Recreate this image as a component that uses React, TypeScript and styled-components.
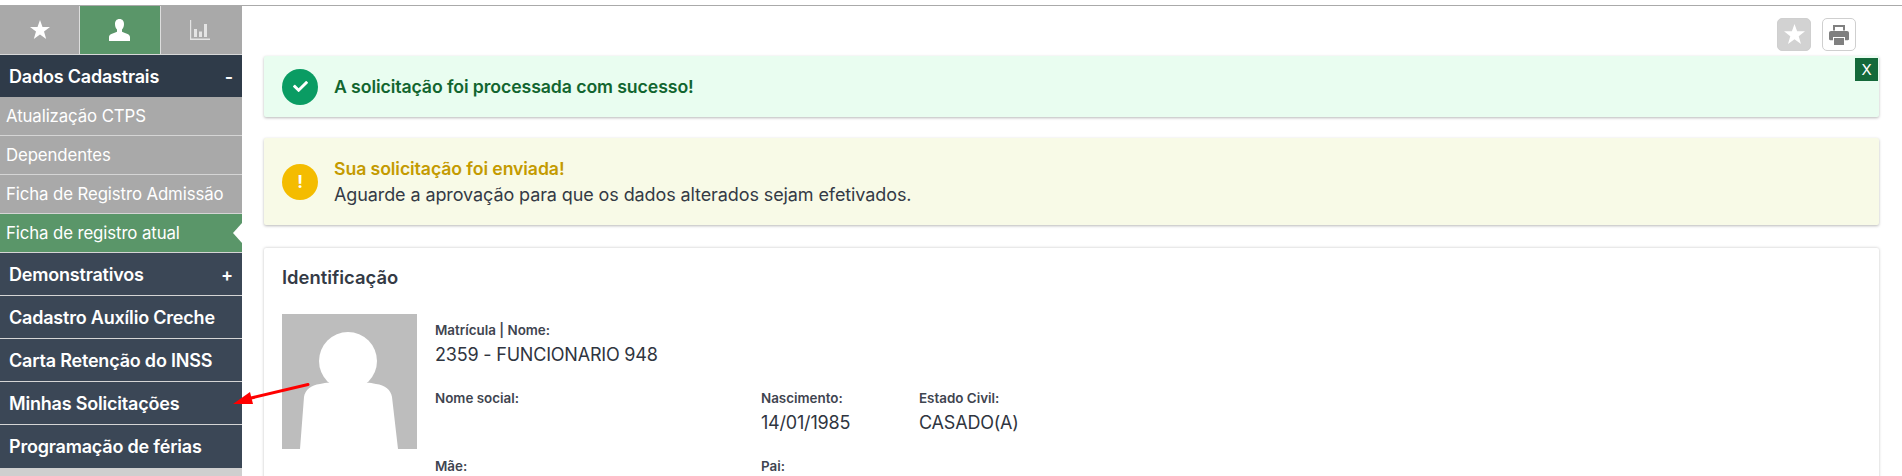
import React from 'react';
import styled, { createGlobalStyle } from 'styled-components';
import { FaCheck } from 'react-icons/fa';

const GlobalStyle = createGlobalStyle`
  html, body {
    margin: 0;
    padding: 0;
    height: 476px;
    overflow: hidden;
    background: #fff;
    font-family: Inter, Lato, sans-serif;
    color: #343a45;
  }
`;

const Page = styled.div`
  position: relative;
  height: 476px;
  padding-top: 5px;
  box-sizing: border-box;
  overflow: hidden;
`;

const Frame = styled.div`
  display: flex;
  height: 470px;
  border-top: 1px solid #aaa;
`;

const Sidebar = styled.nav`
  width: 242px;
  flex: none;
  background: #cfcfcf;
`;

const Tabs = styled.div`
  display: flex;
  height: 49px;
  box-sizing: border-box;
  background: #a9a9a9;
  border-bottom: 1px solid #d8d8d8;
  padding-right: 2px;
`;

const Tab = styled.div<{ $active?: boolean }>`
  flex: 1;
  display: flex;
  align-items: center;
  justify-content: center;
  color: #fff;
  background: ${(p) => (p.$active ? '#5a9669' : '#a9a9a9')};
  border-left: ${(p) => (p.$active ? '1px solid #ddd' : 'none')};
  border-right: ${(p) => (p.$active ? '1px solid #ddd' : 'none')};
`;

const MenuHeader = styled.div<{ $open?: boolean }>`
  display: flex;
  align-items: center;
  justify-content: space-between;
  height: ${(p) => (p.$open ? '42px' : '43px')};
  box-sizing: border-box;
  padding: 0 9px;
  background: ${(p) => (p.$open ? '#2f3b49' : '#3b4756')};
  border-bottom: ${(p) => (p.$open ? 'none' : '1px solid #d5d5d5')};
  color: #fff;
  font-size: 18px;
  font-weight: 600;
  letter-spacing: -0.2px;
  &:last-child {
    border-bottom: none;
  }
`;

const SubItem = styled.div<{ $active?: boolean }>`
  position: relative;
  display: flex;
  align-items: center;
  height: 39px;
  box-sizing: border-box;
  padding-left: 6px;
  background: ${(p) => (p.$active ? '#5a9669' : '#a9a9a9')};
  border-bottom: 1px solid #d5d5d5;
  color: #fff;
  font-size: 16.8px;
  letter-spacing: -0.1px;
`;

const Notch = styled.span`
  position: absolute;
  right: 0;
  top: 50%;
  margin-top: -10px;
  border-style: solid;
  border-width: 10px 9px 10px 0;
  border-color: transparent #fff transparent transparent;
`;

const Main = styled.main`
  flex: 1;
  padding: 12px 23px 0 22px;
  min-width: 0;
`;

const Toolbar = styled.div`
  display: flex;
  justify-content: flex-end;
  gap: 11px;
  height: 34px;
  padding-right: 23px;
`;

const ToolButton = styled.div<{ $filled?: boolean }>`
  width: 34px;
  height: 33px;
  box-sizing: border-box;
  border-radius: 5px;
  display: flex;
  align-items: center;
  justify-content: center;
  background: ${(p) => (p.$filled ? '#d2d2d2' : '#fff')};
  border: 1px solid #cfcfcf;
  color: ${(p) => (p.$filled ? '#fff' : '#808080')};
`;

const Alert = styled.div<{ $tone: 'success' | 'warning' }>`
  position: relative;
  display: flex;
  align-items: center;
  gap: 16px;
  box-sizing: border-box;
  height: ${(p) => (p.$tone === 'success' ? '61px' : '87px')};
  margin-top: ${(p) => (p.$tone === 'success' ? '4px' : '21px')};
  padding-left: 18px;
  border-radius: 2px;
  background: ${(p) => (p.$tone === 'success' ? '#e9fdf0' : '#f8fae7')};
  box-shadow: 0 1px 3px rgba(0, 0, 0, 0.28);
`;

const AlertIcon = styled.div<{ $tone: 'success' | 'warning' }>`
  width: 36px;
  height: 36px;
  flex: none;
  border-radius: 50%;
  display: flex;
  align-items: center;
  justify-content: center;
  background: ${(p) => (p.$tone === 'success' ? '#0a9c63' : '#f4bc00')};
  color: #fff;
  font-size: 17px;
  font-weight: 700;
`;

const AlertTitle = styled.div<{ $tone: 'success' | 'warning' }>`
  font-size: 17.7px;
  font-weight: 600;
  line-height: 26px;
  letter-spacing: -0.1px;
  color: ${(p) => (p.$tone === 'success' ? '#11652f' : '#c49a00')};
`;

const AlertText = styled.div`
  font-size: 18px;
  line-height: 26px;
  letter-spacing: -0.1px;
  color: #343a45;
`;

const CloseButton = styled.div`
  position: absolute;
  top: 2px;
  right: 1px;
  width: 23px;
  height: 23px;
  display: flex;
  align-items: center;
  justify-content: center;
  background: #14693a;
  color: #fff;
  font-size: 15px;
`;

const Card = styled.section`
  margin-top: 23px;
  height: 260px;
  padding: 18px 18px;
  box-sizing: border-box;
  border-radius: 2px;
  box-shadow: 0 0 3px rgba(0, 0, 0, 0.25);
`;

const CardTitle = styled.h2`
  margin: 0 0 26px;
  font-size: 18.4px;
  line-height: 22px;
  font-weight: 600;
  color: #343a45;
`;

const CardBody = styled.div`
  display: flex;
  gap: 18px;
`;

const Avatar = styled.svg`
  width: 135px;
  height: 135px;
  flex: none;
  display: block;
`;

const InfoGrid = styled.div`
  display: grid;
  grid-template-columns: 326px 158px 1fr;
  grid-auto-rows: 68px;
  padding-top: 8px;
`;

const Wide = styled.div`
  grid-column: 1 / -1;
`;

const Label = styled.div`
  font-size: 13.4px;
  line-height: 17px;
  font-weight: 600;
  color: #3f4550;
`;

const Value = styled.div`
  font-size: 18px;
  line-height: 28px;
  margin-top: 2px;
  letter-spacing: -0.2px;
  color: #2f3540;
`;

const Arrow = styled.svg`
  position: absolute;
  left: 230px;
  top: 378px;
  width: 84px;
  height: 32px;
`;

const StarIcon = ({ size }: { size: number }) => (
  <svg width={size} height={size} viewBox="0 0 20 20" fill="currentColor">
    <path d="M10 0l2.500 7H20l-6 4.600L16.200 19 10 14.600 3.800 19 6 11.600 0 7h7.500z" />
  </svg>
);

const UserIcon = () => (
  <svg width="21" height="23" viewBox="0 0 21 23" fill="currentColor">
    <path d="M10.500 0C7.400 0 6 2.200 6 5c0 2.200.8 4.400 2 5.600v2.200c-2.600 1.200-8 2.200-8 5.200v4h21v-4c0-3-5.400-4-8-5.200v-2.200c1.200-1.200 2-3.400 2-5.600 0-2.800-1.400-5-4.500-5z" />
  </svg>
);

const StatsIcon = () => (
  <svg width="20" height="20" viewBox="0 0 20 20" fill="#e4e4e4">
    <path d="M0 0h1.200v18.600H20V20H0z" />
    <rect x="4" y="9" width="3" height="8" />
    <rect x="9" y="11.500" width="3" height="5.500" />
    <rect x="14" y="4" width="3" height="13" />
  </svg>
);

const PrintIcon = () => (
  <svg width="20" height="20" viewBox="0 0 20 20" fill="currentColor">
    <path d="M4 0h12v5.500h-2V2H6v3.500H4z" />
    <path d="M2 6h16c1.200 0 2 .8 2 2v6c0 .8-.5 1.200-1.200 1.200H16v-3.200H4v3.200H1.200C.5 15.200 0 14.800 0 14V8c0-1.200.8-2 2-2z" />
    <path d="M5 13h10v7H5z" />
  </svg>
);

const subItems = ['Atualização CTPS', 'Dependentes', 'Ficha de Registro Admissão'];
const menuItems = ['Cadastro Auxílio Creche', 'Carta Retenção do INSS', 'Minhas Solicitações', 'Programação de férias'];

const App = () => {
  return (
    <Page>
      <GlobalStyle />
      <Frame>
        <Sidebar>
          <Tabs>
            <Tab>
              <StarIcon size={20} />
            </Tab>
            <Tab $active>
              <UserIcon />
            </Tab>
            <Tab>
              <StatsIcon />
            </Tab>
          </Tabs>
          <MenuHeader $open>
            Dados Cadastrais <span>-</span>
          </MenuHeader>
          {subItems.map((item) => (
            <SubItem key={item}>{item}</SubItem>
          ))}
          <SubItem $active>
            Ficha de registro atual
            <Notch />
          </SubItem>
          <MenuHeader>
            Demonstrativos <span>+</span>
          </MenuHeader>
          {menuItems.map((item) => (
            <MenuHeader key={item}>{item}</MenuHeader>
          ))}
        </Sidebar>
        <Main>
          <Toolbar>
            <ToolButton $filled>
              <StarIcon size={21} />
            </ToolButton>
            <ToolButton>
              <PrintIcon />
            </ToolButton>
          </Toolbar>
          <Alert $tone="success">
            <AlertIcon $tone="success">
              <FaCheck size={15} />
            </AlertIcon>
            <AlertTitle $tone="success">A solicitação foi processada com sucesso!</AlertTitle>
            <CloseButton>X</CloseButton>
          </Alert>
          <Alert $tone="warning">
            <AlertIcon $tone="warning">!</AlertIcon>
            <div>
              <AlertTitle $tone="warning">Sua solicitação foi enviada!</AlertTitle>
              <AlertText>Aguarde a aprovação para que os dados alterados sejam efetivados.</AlertText>
            </div>
          </Alert>
          <Card>
            <CardTitle>Identificação</CardTitle>
            <CardBody>
              <Avatar viewBox="0 0 135 135">
                <rect width="135" height="135" fill="#bdbdbd" />
                <circle cx="66" cy="47" r="29" fill="#fff" />
                <path
                  d="M18 135l4-52c1-7 7-12 16-13 6-1 10-2 14 0 9 3 19 3 28 0 4-2 8-1 14 0 9 1 15 6 16 13l6 52z"
                  fill="#fff"
                />
              </Avatar>
              <InfoGrid>
                <Wide>
                  <Label>Matrícula | Nome:</Label>
                  <Value>2359 - FUNCIONARIO 948</Value>
                </Wide>
                <div>
                  <Label>Nome social:</Label>
                </div>
                <div>
                  <Label>Nascimento:</Label>
                  <Value>14/01/1985</Value>
                </div>
                <div>
                  <Label>Estado Civil:</Label>
                  <Value>CASADO(A)</Value>
                </div>
                <div>
                  <Label>Mãe:</Label>
                </div>
                <div>
                  <Label>Pai:</Label>
                </div>
              </InfoGrid>
            </CardBody>
          </Card>
        </Main>
      </Frame>
      <Arrow viewBox="0 0 84 32">
        <path d="M78 6.500L19 20.500" stroke="#f00" strokeWidth="3" strokeLinecap="round" fill="none" />
        <path d="M3 26L20 14l3 12z" fill="#f00" />
      </Arrow>
    </Page>
  );
};

export default App;
